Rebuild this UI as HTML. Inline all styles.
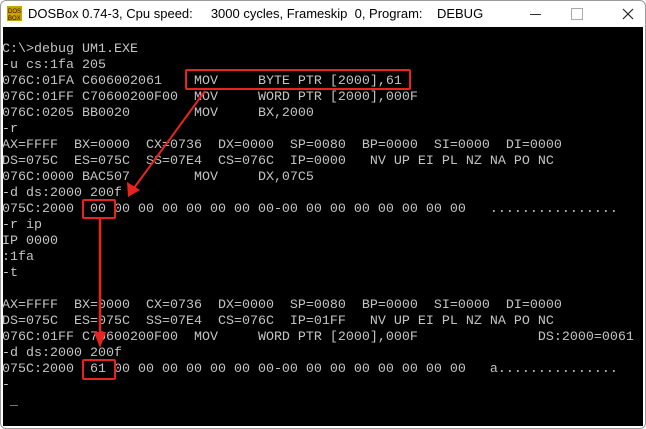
<!DOCTYPE html>
<html><head><style>
body{margin:0;width:646px;height:429px;background:#fff;overflow:hidden;position:relative;font-family:"Liberation Sans",sans-serif}
.win{position:absolute;left:0;top:0;width:644px;height:427px;border:1px solid #9a9a9a;border-radius:6px;background:#fff;overflow:hidden}
.title{position:absolute;left:27px;top:5px;font-size:13px;color:#000;white-space:pre}
.scr{position:absolute;left:2px;top:26px;width:640px;height:399px;background:#000}
pre{position:absolute;left:2px;top:42px;margin:0;font-family:"Liberation Mono",monospace;font-size:13.33px;line-height:16px;color:#c4c4c4}
.box{position:absolute;border:2px solid #e8251c;border-radius:2px}
</style></head><body>
<div class="win">
<svg style="position:absolute;left:6px;top:5px" width="15" height="15"><rect width="15" height="15" fill="#c9a400"/><text x="1" y="7" font-size="6" fill="#300" font-family="Liberation Sans">DOS</text><text x="1" y="14" font-size="6" fill="#300" font-family="Liberation Sans">BOX</text></svg>
<div class="title">DOSBox 0.74-3, Cpu speed:     3000 cycles, Frameskip  0, Program:    DEBUG</div>
<div style="position:absolute;left:529px;top:13px;width:11px;height:1px;background:#333"></div>
<div style="position:absolute;left:570px;top:7px;width:10px;height:10px;border:1px solid #aaa"></div>
<svg style="position:absolute;left:621px;top:7px" width="12" height="12"><path d="M1 1L11 11M11 1L1 11" stroke="#222" stroke-width="1.2"/></svg>
<div class="scr"></div>
</div>
<pre>C:\>debug UM1.EXE
-u cs:1fa 205
076C:01FA C606002061    MOV     BYTE PTR [2000],61
076C:01FF C70600200F00  MOV     WORD PTR [2000],000F
076C:0205 BB0020        MOV     BX,2000
-r
AX=FFFF  BX=0000  CX=0736  DX=0000  SP=0080  BP=0000  SI=0000  DI=0000
DS=075C  ES=075C  SS=07E4  CS=076C  IP=0000   NV UP EI PL NZ NA PO NC
076C:0000 BAC507        MOV     DX,07C5
-d ds:2000 200f
075C:2000  00 00 00 00 00 00 00 00-00 00 00 00 00 00 00 00   ................
-r ip
IP 0000
:1fa
-t

AX=FFFF  BX=0000  CX=0736  DX=0000  SP=0080  BP=0000  SI=0000  DI=0000
DS=075C  ES=075C  SS=07E4  CS=076C  IP=01FF   NV UP EI PL NZ NA PO NC
076C:01FF C70600200F00  MOV     WORD PTR [2000],000F               DS:2000=0061
-d ds:2000 200f
075C:2000  61 00 00 00 00 00 00 00-00 00 00 00 00 00 00 00   a...............
-
 _</pre>
<div class="box" style="left:185px;top:69px;width:222px;height:17px"></div>
<div class="box" style="left:82px;top:199px;width:30px;height:16px"></div>
<div class="box" style="left:82px;top:359px;width:30px;height:17px"></div>
<svg style="position:absolute;left:0;top:0" width="646" height="429">
<line x1="205" y1="91" x2="134" y2="188" stroke="#e8251c" stroke-width="2"/>
<path d="M128 197L127 182L140 190Z" fill="#e8251c"/>
<line x1="100" y1="219" x2="100" y2="336" stroke="#e8251c" stroke-width="2.5"/>
<path d="M100 348L94 332L106 332Z" fill="#e8251c"/>
</svg>
</body></html>
